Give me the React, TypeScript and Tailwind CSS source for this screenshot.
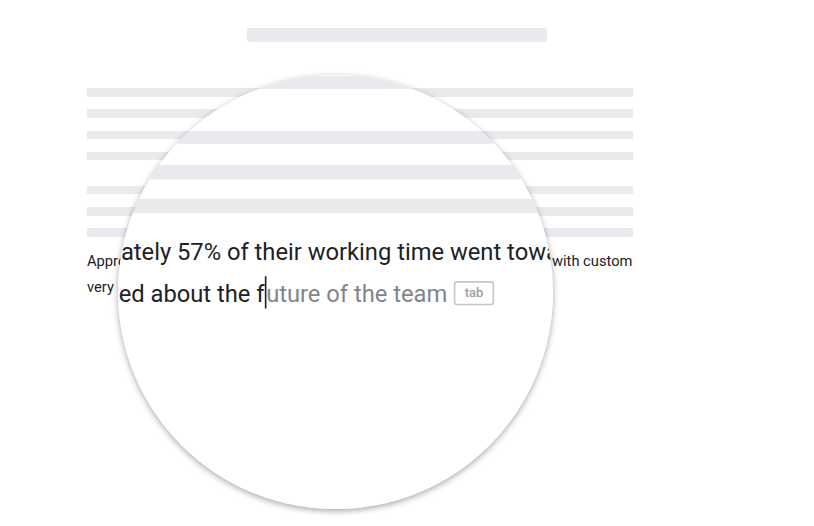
import React from "react";

const bar = "h-[8.5px] bg-[#e8eaed]";

function Doc() {
  return (
    <div className="w-[814px] h-[526px] bg-white pt-[28px] font-['Roboto',sans-serif] text-[#202124]">
      <div className="ml-[247px] w-[300px] h-[14px] rounded-[3px] bg-[#e8eaed]" />
      <div className="ml-[87px] w-[546px] mt-[46px] overflow-hidden">
        <div className="flex flex-col gap-[12.8px]">
          <div className={bar} />
          <div className={bar} />
          <div className={bar} />
          <div className={bar} />
        </div>
        <div className="flex flex-col gap-[12.8px] mt-[25.5px]">
          <div className={bar} />
          <div className={bar} />
          <div className={bar} />
        </div>
        <div className="mt-[11px] text-[14.7px] leading-[26px] whitespace-nowrap">
          <div>Approximately 57% of their working time went towards working directly with customers</div>
          <div>
            very excited about the f
            <span className="inline-block w-px h-[20px] bg-[#202124] align-[-4.4px]" />
            <span className="text-[#80868b]">uture of the team</span>
            <span className="inline-block overflow-hidden align-[-2.4px] ml-[4px] w-[25px] h-[15px] border border-[#c4c6c9] rounded-[2px] text-center text-[8px] leading-[13px] font-medium text-[#9aa0a6]">
              tab
            </span>
          </div>
        </div>
      </div>
    </div>
  );
}

export default function App() {
  return (
    <div className="relative w-[814px] h-[526px] overflow-hidden bg-white">
      <Doc />
      {/* magnifier */}
      <div className="absolute left-[118px] top-[75px] w-[435px] h-[434px] rounded-full overflow-hidden bg-white shadow-[0_2px_6px_rgba(0,0,0,0.35)]">
        <div className="absolute left-[-118px] top-[-75px] origin-[197px_275.6px] scale-[1.615]">
          <Doc />
        </div>
      </div>
    </div>
  );
}
